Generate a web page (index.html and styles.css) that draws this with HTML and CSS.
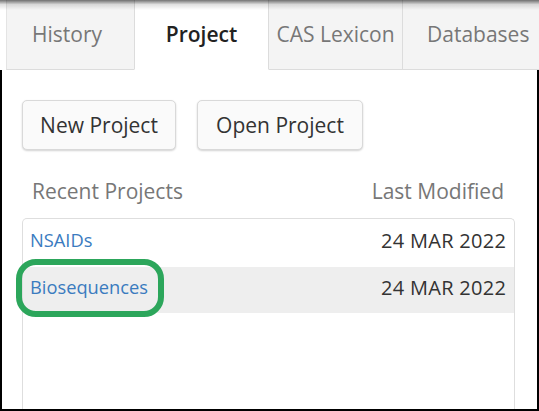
FILE: index.html
```html
<!DOCTYPE html>
<html>
<head>
<meta charset="utf-8">
<link rel="stylesheet" href="styles.css">
</head>
<body>
<div class="window">
  <div class="shade"></div>
  <nav class="tabs">
    <div class="tab tab-history">History</div>
    <div class="tab tab-active">Project</div>
    <div class="tab tab-cas">CAS Lexicon</div>
    <div class="tab tab-db">Databases</div>
  </nav>
  <main class="panel">
    <div class="actions">
      <button class="btn btn-new">New Project</button>
      <button class="btn btn-open">Open Project</button>
    </div>
    <div class="list-head">
      <span>Recent Projects</span>
      <span>Last Modified</span>
    </div>
    <div class="list">
      <div class="row">
        <a class="link">NSAIDs</a>
        <span class="date">24 MAR 2022</span>
      </div>
      <div class="row row-hover">
        <a class="link ringed">Biosequences</a>
        <span class="date">24 MAR 2022</span>
      </div>
    </div>
  </main>
</div>
</body>
</html>
```

FILE: styles.css
```css
html, body {
  margin: 0;
  padding: 0;
  background: #fff;
}
body {
  width: 539px;
  height: 411px;
  overflow: hidden;
  font-family: "Open Sans", "Liberation Sans", sans-serif;
}
.window {
  position: relative;
  width: 539px;
  height: 411px;
  display: flex;
  flex-direction: column;
  box-sizing: border-box;
}
.shade {
  position: absolute;
  left: 0;
  right: 0;
  top: 0;
  height: 10px;
  background: linear-gradient(to bottom, rgba(0,0,0,0.55), rgba(0,0,0,0.12) 45%, rgba(0,0,0,0));
  pointer-events: none;
  z-index: 5;
}
.tabs {
  display: flex;
  height: 70px;
  flex: none;
  padding-left: 6px;
  background: #fff;
}
.tab {
  box-sizing: border-box;
  height: 70px;
  display: flex;
  align-items: center;
  font-size: 21px;
  color: #777;
  background: #f4f4f4;
  border-bottom: 1px solid #dcdcdc;
  padding-bottom: 1px;
  white-space: nowrap;
}
.tab-history {
  width: 128px;
  padding-left: 25px;
  border-left: 1px solid #e4e4e4;
}
.tab-active {
  width: 135px;
  justify-content: center;
  background: #fff;
  color: #222;
  font-weight: 600;
  border-left: 1px solid #dcdcdc;
  border-right: 1px solid #dcdcdc;
  border-bottom-color: transparent;
}
.tab-cas {
  width: 134px;
  justify-content: center;
  border-right: 1px solid #dcdcdc;
}
.tab-db {
  flex: 1;
  padding-left: 24px;
}
.panel {
  flex: 1;
  border-left: 2px solid #000;
  border-right: 2px solid #000;
  border-bottom: 2px solid #000;
  padding: 30px 22px 0 20px;
  display: flex;
  flex-direction: column;
  min-height: 0;
}
.actions {
  display: flex;
  gap: 21px;
}
.btn {
  height: 50px;
  padding: 0;
  white-space: nowrap;
  font-family: inherit;
  font-size: 21px;
  color: #333;
  background: #fafafa;
  border: 1px solid #d9d9d9;
  border-radius: 5px;
  box-shadow: 0 1px 2px rgba(0,0,0,0.18);
}
.btn-new { width: 154px; }
.btn-open { width: 166px; }
.list-head {
  display: flex;
  justify-content: space-between;
  margin-top: 28px;
  padding: 0 11px 0 10px;
  font-size: 21px;
  line-height: 26px;
  color: #777;
}
.list {
  margin-top: 14px;
  flex: 1;
  border: 1px solid #dedede;
  border-bottom: none;
  border-radius: 5px 5px 0 0;
}
.row {
  box-sizing: border-box;
  display: flex;
  justify-content: space-between;
  align-items: center;
  height: 48px;
  padding: 0 8px 6px 7px;
  font-size: 18.3px;
}
.row-hover {
  height: 46px;
  background: #eee;
}
.link {
  color: #3a7bbf;
  position: relative;
  line-height: 26px;
}
.date {
  color: #333;
  font-size: 20px;
  letter-spacing: 0.3px;
  margin-right: -0.3px;
}
.ringed::after {
  content: "";
  position: absolute;
  left: -14px;
  right: -16px;
  top: -15px;
  bottom: -17px;
  border: 6px solid #2ca65b;
  border-radius: 20px;
}
```
